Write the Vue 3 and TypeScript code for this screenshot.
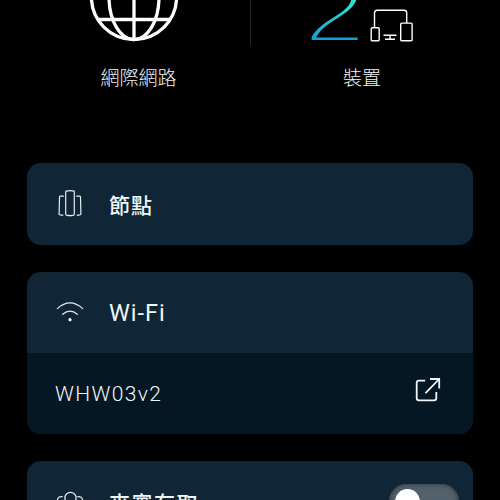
<script setup lang="ts">
import { ref } from 'vue'

const deviceCount = ref<number>(2)
const networkName = ref<string>('WHW03v2')
const guestEnabled = ref<boolean>(false)
</script>

<template>
  <main class="screen">
    <section class="summary">
      <div class="stat">
        <div class="figure">
          <svg class="globe" width="90" height="90" viewBox="0 0 90 90">
            <circle cx="45" cy="45" r="42.6" />
            <ellipse cx="45" cy="45" rx="25" ry="42.6" />
            <path d="M45 2.6V87.4M10 22.5H80M3 45H87M9 67.5H81" />
          </svg>
        </div>
        <span class="caption">網際網路</span>
      </div>
      <div class="rule"></div>
      <div class="stat">
        <div class="figure">
          <svg class="count" width="66" height="110" viewBox="0 0 66 110">
            <defs>
              <linearGradient id="count-fill" gradientUnits="userSpaceOnUse" x1="0" y1="-75" x2="0" y2="0">
                <stop offset="0" stop-color="#2fe6c8" />
                <stop offset=".4" stop-color="#2bdcd2" />
                <stop offset="1" stop-color="#139bd6" />
              </linearGradient>
            </defs>
            <text transform="translate(-.5 108.3) scale(1 .78)" fill="url(#count-fill)">{{ deviceCount }}</text>
          </svg>
          <svg class="device-icon" width="44" height="34" viewBox="0 0 44 34">
            <path d="M4.5 18.5V4Q4.5 1.3 7.2 1.3H34Q36.7 1.3 36.7 4V14M13.5 26.2H26.5M20 26.5V30M15 30.2H25" />
            <rect x="1.2" y="18.7" width="8" height="13" rx="1" />
            <rect x="30.7" y="14.1" width="11.4" height="17.6" rx="1" />
          </svg>
        </div>
        <span class="caption">裝置</span>
      </div>
    </section>

    <section class="card">
      <header class="head">
        <svg class="icon" width="30" height="30" viewBox="0 0 30 30">
          <path d="M11 2.1Q15 1.2 19 2.1L19.3 3V25.2L18.7 26.2Q15 27.2 11.3 26.2L10.7 25.2V3ZM8.3 7.2H5.1Q4.5 7.3 4.5 8L4.1 25.2Q4.2 26.1 7.8 26.2M21.7 7.2H24.9Q25.5 7.3 25.5 8L25.9 25.2Q25.8 26.1 22.2 26.2" />
        </svg>
        <h2 class="zh">節點</h2>
      </header>
    </section>

    <section class="card">
      <header class="head">
        <svg class="icon" width="30" height="30" viewBox="0 0 30 30">
          <path d="M2.3 11.6Q15 .2 27.7 11.6M7.7 17.3Q15 11.1 22.3 17.3" />
          <circle class="dot" cx="15" cy="22.7" r="1.6" />
        </svg>
        <h2 class="latin">Wi-Fi</h2>
      </header>
      <div class="network">
        <span class="ssid">{{ networkName }}</span>
        <svg class="share" width="26" height="26" viewBox="0 0 26 26">
          <path d="M10.2 3.7H4Q1.7 3.7 1.7 6V21Q1.7 23.3 4 23.3H19Q21.3 23.3 21.3 21V15M15 2H24.2V11.4M24.2 2L10.5 16.2" />
        </svg>
      </div>
    </section>

    <section class="card">
      <header class="head">
        <svg class="icon" width="30" height="30" viewBox="0 0 30 30">
          <circle cx="15.5" cy="11" r="5.6" />
          <path d="M5 27Q5 18 15 18Q25 18 25 27M7.2 9.6Q2.5 9.2 2.5 13.5Q2.5 17 6 18M22.8 9.6Q27.5 9.2 27.5 13.5Q27.5 17 24 18" />
        </svg>
        <h2 class="zh guest">來賓存取</h2>
        <button class="toggle" :class="{ on: guestEnabled }" @click="guestEnabled = !guestEnabled">
          <i class="knob"></i>
        </button>
      </header>
    </section>
  </main>
</template>

<style>
html,
body {
  background: #000;
  overflow: hidden;
}
</style>

<style scoped>
.screen {
  box-sizing: border-box;
  width: 500px;
  height: 500px;
  padding: 0 27px;
  overflow: hidden;
  background: #000;
  color: #f1f6f8;
  font-family: Roboto, "Noto Sans CJK TC", sans-serif;
}

.summary {
  display: grid;
  grid-template-columns: 223px 1px 222px;
  height: 163px;
}

.stat {
  display: flex;
  flex-direction: column;
  align-items: center;
}

.figure {
  display: flex;
  align-items: flex-end;
  height: 44px;
}

.globe {
  flex: none;
  margin: 0 10px 2px 0;
  fill: none;
  stroke: #fff;
  stroke-width: 3.3;
}

.count {
  flex: none;
  overflow: visible;
  font-family: "Liberation Sans", sans-serif;
  font-size: 112px;
  stroke: #000;
  stroke-width: 5px;
}

.device-icon {
  flex: none;
  margin: 0 6px 1px 0;
  fill: none;
  stroke: #fff;
  stroke-width: 1.4;
}

.caption {
  margin-top: 19px;
  font-family: "Noto Sans CJK TC", sans-serif;
  font-size: 19px;
  font-weight: 300;
  line-height: 27px;
}

.rule {
  height: 45px;
  background: #262626;
}

.card {
  width: 446px;
  margin-bottom: 27px;
  border-radius: 14px;
  overflow: hidden;
  background: #102636;
}

.head {
  display: flex;
  align-items: center;
  box-sizing: border-box;
  height: 81.5px;
  padding: 0 14px 0 28px;
}

.icon {
  flex: none;
  margin-right: 24px;
  fill: none;
  stroke: #e2edf2;
  stroke-width: 1.2;
  stroke-linecap: round;
}

.dot {
  fill: #fff;
  stroke: none;
}

h2 {
  margin: 0;
  line-height: 30px;
}

.zh {
  font-family: "Noto Sans CJK TC", sans-serif;
  font-size: 21px;
  font-weight: 500;
  letter-spacing: 1px;
}

.guest {
  letter-spacing: 1.5px;
}

.latin {
  padding-top: 2px;
  font-size: 23.5px;
  font-weight: 400;
  letter-spacing: 1px;
}

.network {
  display: flex;
  align-items: center;
  justify-content: space-between;
  height: 81px;
  padding: 0 32px 0 28px;
  background: #041722;
}

.ssid {
  font-size: 21px;
  font-weight: 300;
  letter-spacing: 1.4px;
}

.share {
  margin-bottom: 8px;
  fill: none;
  stroke: #f1f6f8;
  stroke-width: 1.8;
}

.toggle {
  box-sizing: border-box;
  width: 70px;
  height: 35px;
  margin-left: auto;
  padding: 5px 6px;
  border: 0;
  border-radius: 18px;
  background: #53616c;
  box-shadow: inset 0 0 5px #27333d;
}

.knob {
  display: block;
  width: 25px;
  height: 25px;
  border-radius: 50%;
  background: #fff;
}

.on .knob {
  margin-left: auto;
}
</style>
